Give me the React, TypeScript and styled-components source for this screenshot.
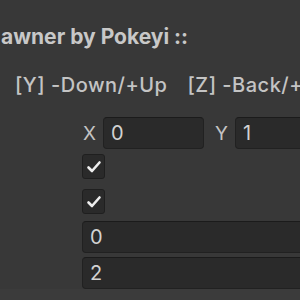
import React from 'react';
import styled, { createGlobalStyle } from 'styled-components';

const GlobalStyle = createGlobalStyle`
  html, body {
    margin: 0;
    padding: 0;
    background: #383838;
    overflow: hidden;
  }
  body {
    font-family: Inter, "Noto Sans", "DejaVu Sans", sans-serif;
    color: #c4c4c4;
  }
`;

const Inspector = styled.div`
  width: 300px;
  height: 300px;
  overflow: hidden;
  display: flex;
  flex-direction: column;
  background: #383838;
`;

const Title = styled.div`
  font-size: 21px;
  font-weight: 700;
  color: #c8c8c8;
  white-space: nowrap;
  margin-top: 24px;
  padding-left: 1px;
  line-height: 26px;
`;

const Hint = styled.div`
  font-size: 20px;
  font-weight: 500;
  color: #c4c4c4;
  white-space: nowrap;
  margin-top: 23px;
  padding-left: 15px;
  line-height: 24px;
  letter-spacing: 0.5px;
`;

const Gap = styled.span`
  display: inline-block;
  width: 20px;
`;

const Fields = styled.div`
  display: flex;
  flex-direction: column;
  padding-left: 82px;
  margin-top: 20px;
  gap: 5px;
`;

const VectorRow = styled.div`
  display: flex;
  align-items: center;
  height: 32px;
`;

const AxisLabel = styled.span`
  font-size: 19px;
  color: #c4c4c4;
  width: 20px;
  padding-left: 1px;
  flex-shrink: 0;
`;

const Field = styled.div<{ $width: number }>`
  box-sizing: border-box;
  height: 32px;
  width: ${p => p.$width}px;
  flex-shrink: 0;
  background: #2a2a2a;
  border: 1px solid #212121;
  border-top-color: #1b1b1b;
  border-radius: 4px;
  display: flex;
  align-items: center;
  padding-left: 7px;
  font-size: 20px;
  color: #d2d2d2;
`;

const Spacer = styled.div`
  width: 10px;
  flex-shrink: 0;
`;

const CheckRow = styled.div<{ $top: number }>`
  display: flex;
  height: 25px;
  margin-top: ${p => p.$top}px;
`;

const CheckBox = styled.div`
  box-sizing: border-box;
  width: 23px;
  height: 25px;
  background: #2a2a2a;
  border: 1px solid #1f1f1f;
  border-radius: 3px;
  display: flex;
  align-items: center;
  justify-content: center;
`;

const ValueField = styled(Field)<{ $top: number }>`
  margin-top: ${p => p.$top}px;
`;

const Footer = styled.div`
  margin-top: 0;
  height: 12px;
  flex-shrink: 0;
  background: #3b3b3b;
  border-bottom: 1px solid #2a2a2a;
`;

const Check = () => (
  <svg width="16" height="14" viewBox="0 0 16 14">
    <path d="M2.5 7.5 L6 11 L13.5 2.5" fill="none" stroke="#eeeeee" strokeWidth="2.6" strokeLinecap="round" strokeLinejoin="round" />
  </svg>
);

export default function App() {
  return (
    <>
      <GlobalStyle />
      <Inspector>
        <Title>awner by Pokeyi ::</Title>
        <Hint>
          [Y] -Down/+Up<Gap />[Z] -Back/+
        </Hint>
        <Fields>
          <VectorRow>
            <AxisLabel>X</AxisLabel>
            <Field $width={101}>0</Field>
            <Spacer />
            <AxisLabel>Y</AxisLabel>
            <Field $width={120}>1</Field>
          </VectorRow>
          <CheckRow $top={0}>
            <CheckBox><Check /></CheckBox>
          </CheckRow>
          <CheckRow $top={5}>
            <CheckBox><Check /></CheckBox>
          </CheckRow>
          <ValueField $width={260} $top={2}>0</ValueField>
          <ValueField $width={260} $top={-1}>2</ValueField>
        </Fields>
        <Footer />
      </Inspector>
    </>
  );
}
